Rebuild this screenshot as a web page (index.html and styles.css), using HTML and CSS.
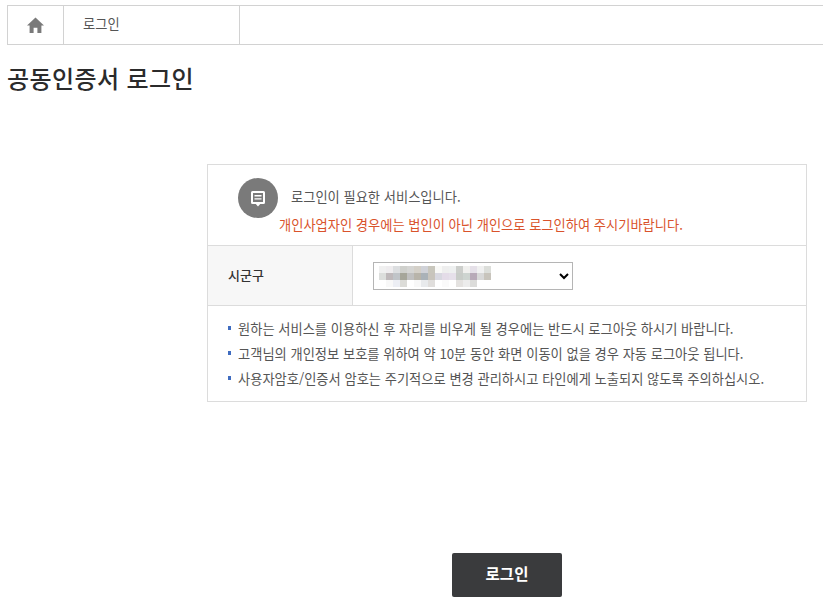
FILE: index.html
```html
<!DOCTYPE html>
<html lang="ko">
<head>
<meta charset="utf-8">
<title>공동인증서 로그인</title>
<link rel="stylesheet" href="styles.css">
</head>
<body>
<nav class="crumbs">
  <div class="crumb-home">
    <svg class="home-icon" width="17" height="16" viewBox="0 0 17 16"><path d="M8.500.6 17 8.400h-2.600V16h-4v-5.200H6.600V16h-4V8.400H0z" fill="#7a7a7a"/></svg>
  </div>
  <div class="crumb-page">로그인</div>
</nav>
<h1 class="title">공동인증서 로그인</h1>
<section class="panel">
  <div class="notice">
    <div class="notice-head">
      <span class="notice-icon">
        <svg class="bubble" width="14" height="16" viewBox="0 0 14 16"><path d="M1.500 0h11A1.500 1.500 0 0 1 14 1.500v10a1.500 1.500 0 0 1-1.500 1.500H9.200L7 15.500 4.800 13H1.500A1.500 1.500 0 0 1 0 11.500v-10A1.500 1.500 0 0 1 1.500 0z" fill="#fff"/><path d="M2 2h10v9H2z" fill="#7a7a7a"/><path d="M3.500 4h7v1.400h-7zM3.500 7.200h7v1.400h-7z" fill="#fff"/></svg>
      </span>
      <p class="notice-text">로그인이 필요한 서비스입니다.</p>
    </div>
    <p class="notice-warn">개인사업자인 경우에는 법인이 아닌 개인으로 로그인하여 주시기바랍니다.</p>
  </div>
  <div class="field">
    <div class="field-label">시군구</div>
    <div class="field-value">
      <div class="select-wrap">
        <select class="select" aria-label="시군구"><option></option></select>
        <svg class="mosaic" width="112" height="21" viewBox="0 0 112 21" shape-rendering="crispEdges">
          <g>
            <rect x="0" y="0" width="7" height="7" fill="#f0f0f0"/><rect x="7" y="0" width="7" height="7" fill="#eeecee"/><rect x="14" y="0" width="7" height="7" fill="#dcdee0"/><rect x="21" y="0" width="7" height="7" fill="#cfd0cc"/><rect x="28" y="0" width="7" height="7" fill="#d5d5d3"/><rect x="35" y="0" width="7" height="7" fill="#d4d0c8"/><rect x="42" y="0" width="7" height="7" fill="#d0d2d8"/><rect x="49" y="0" width="7" height="7" fill="#c8c6bc"/><rect x="56" y="0" width="7" height="7" fill="#f8f8f6"/><rect x="63" y="0" width="7" height="7" fill="#eeeeee"/><rect x="70" y="0" width="7" height="7" fill="#eef0f0"/><rect x="77" y="0" width="7" height="7" fill="#cccecb"/><rect x="84" y="0" width="7" height="7" fill="#f0f0ee"/><rect x="91" y="0" width="7" height="7" fill="#e5e0e8"/><rect x="98" y="0" width="7" height="7" fill="#f0f0f0"/><rect x="105" y="0" width="7" height="7" fill="#dcdeda"/>
          </g>
          <g>
            <rect x="0" y="7" width="7" height="7" fill="#dcdedc"/><rect x="7" y="7" width="7" height="7" fill="#bfb9bb"/><rect x="14" y="7" width="7" height="7" fill="#c0c4c8"/><rect x="21" y="7" width="7" height="7" fill="#a6a69a"/><rect x="28" y="7" width="7" height="7" fill="#c0c0c0"/><rect x="35" y="7" width="7" height="7" fill="#b8b4aa"/><rect x="42" y="7" width="7" height="7" fill="#aab2b8"/><rect x="49" y="7" width="7" height="7" fill="#c8c4bc"/><rect x="56" y="7" width="7" height="7" fill="#d8d8e0"/><rect x="63" y="7" width="7" height="7" fill="#e4dce8"/><rect x="70" y="7" width="7" height="7" fill="#e6e0ea"/><rect x="77" y="7" width="7" height="7" fill="#c8ccc8"/><rect x="84" y="7" width="7" height="7" fill="#cdd4d0"/><rect x="91" y="7" width="7" height="7" fill="#b8aab8"/><rect x="98" y="7" width="7" height="7" fill="#d8d8d8"/><rect x="105" y="7" width="7" height="7" fill="#c8c4bc"/>
          </g>
          <g>
            <rect x="7" y="14" width="7" height="7" fill="#f8f8f8"/><rect x="14" y="14" width="7" height="7" fill="#eceef4"/><rect x="21" y="14" width="7" height="7" fill="#dcdcd8"/><rect x="35" y="14" width="7" height="7" fill="#f8f8f8"/><rect x="42" y="14" width="7" height="7" fill="#e8eaec"/><rect x="49" y="14" width="7" height="7" fill="#e0dedc"/><rect x="63" y="14" width="7" height="7" fill="#fafafa"/><rect x="77" y="14" width="7" height="7" fill="#e4e2e0"/><rect x="84" y="14" width="7" height="7" fill="#ececec"/><rect x="91" y="14" width="7" height="7" fill="#dcdcda"/>
          </g>
        </svg>
      </div>
    </div>
  </div>
  <ul class="tips">
    <li>원하는 서비스를 이용하신 후 자리를 비우게 될 경우에는 반드시 로그아웃 하시기 바랍니다.</li>
    <li>고객님의 개인정보 보호를 위하여 약 10분 동안 화면 이동이 없을 경우 자동 로그아웃 됩니다.</li>
    <li>사용자암호/인증서 암호는 주기적으로 변경 관리하시고 타인에게 노출되지 않도록 주의하십시오.</li>
  </ul>
</section>
<div class="actions"><button class="login" type="button">로그인</button></div>
</body>
</html>
```
FILE: styles.css
```css
* { box-sizing: border-box; }
html, body { margin: 0; padding: 0; }
body {
  background: #fff;
  color: #333;
  font-family: "Noto Sans CJK KR", "Noto Sans", sans-serif;
  font-size: 12px;
  padding-top: 5px;
  height: 614px;
  overflow: hidden;
}
.crumbs {
  display: flex;
  height: 40px;
  margin-left: 7px;
  border: 1px solid #d2d2d2;
  border-right: 0;
}
.crumb-home {
  width: 56px;
  padding-right: 1px;
  display: flex;
  align-items: center;
  justify-content: center;
  border-right: 1px solid #d2d2d2;
}
.crumb-page {
  width: 176px;
  padding: 0 0 4px 19px;
  display: flex;
  align-items: center;
  border-right: 1px solid #d2d2d2;
  font-size: 13.250px;
  color: #555;
}
.title {
  margin: 17px 0 0 7px;
  font-size: 24px;
  line-height: 32px;
  font-weight: 500;
  color: #2b2b2b;
  letter-spacing: 0.4px;
}
.panel {
  margin: 70px 16px 0 207px;
  border: 1px solid #dcdcdc;
  height: 238px;
}
.notice {
  height: 81px;
  border-bottom: 1px solid #dcdcdc;
  padding-top: 13px;
}
.notice-head {
  display: flex;
  align-items: center;
  padding-left: 30px;
  gap: 13px;
}
.notice-icon {
  width: 40px;
  height: 40px;
  border-radius: 50%;
  background: #7a7a7a;
  display: flex;
  align-items: center;
  justify-content: center;
}
.bubble { margin-top: 2px; }
.notice-text { margin: 0 0 3px; font-size: 13.250px; line-height: 18px; color: #555; }
.notice-warn {
  margin: -2px 0 0 71px;
  font-size: 13.250px;
  line-height: 18px;
  color: #d9532c;
}
.field {
  display: flex;
  height: 60px;
  border-bottom: 1px solid #dcdcdc;
}
.field-label {
  width: 145px;
  background: #f7f7f7;
  border-right: 1px solid #dcdcdc;
  padding: 0 0 2px 20px;
  display: flex;
  align-items: center;
  font-size: 13px;
  font-weight: 500;
  color: #333;
}
.field-value {
  flex: 1;
  padding-left: 20px;
  display: flex;
  align-items: center;
}
.select-wrap { position: relative; width: 200px; height: 28px; }
.select {
  width: 200px;
  height: 28px;
  background: #fff;
  border: 1px solid #b5b5b5;
  border-radius: 0;
}
.mosaic { position: absolute; left: 6px; top: 4px; }
.tips {
  list-style: none;
  margin: 0;
  padding: 10px 0 0 20px;
}
.tips li {
  position: relative;
  padding-left: 10px;
  font-size: 13.250px;
  line-height: 25px;
  color: #555;
}
.tips li::before {
  content: "";
  position: absolute;
  left: 0;
  top: 10px;
  width: 3px;
  height: 4px;
  background: #3f6cc0;
}
.actions {
  margin-top: 151px;
  padding-left: 452px;
}
.login {
  display: block;
  width: 110px;
  height: 44px;
  border: 0;
  border-radius: 2px;
  padding: 0 0 5px;
  background: #3a3b3d;
  color: #fff;
  font-family: inherit;
  font-size: 15.500px;
  font-weight: 700;
}
```
